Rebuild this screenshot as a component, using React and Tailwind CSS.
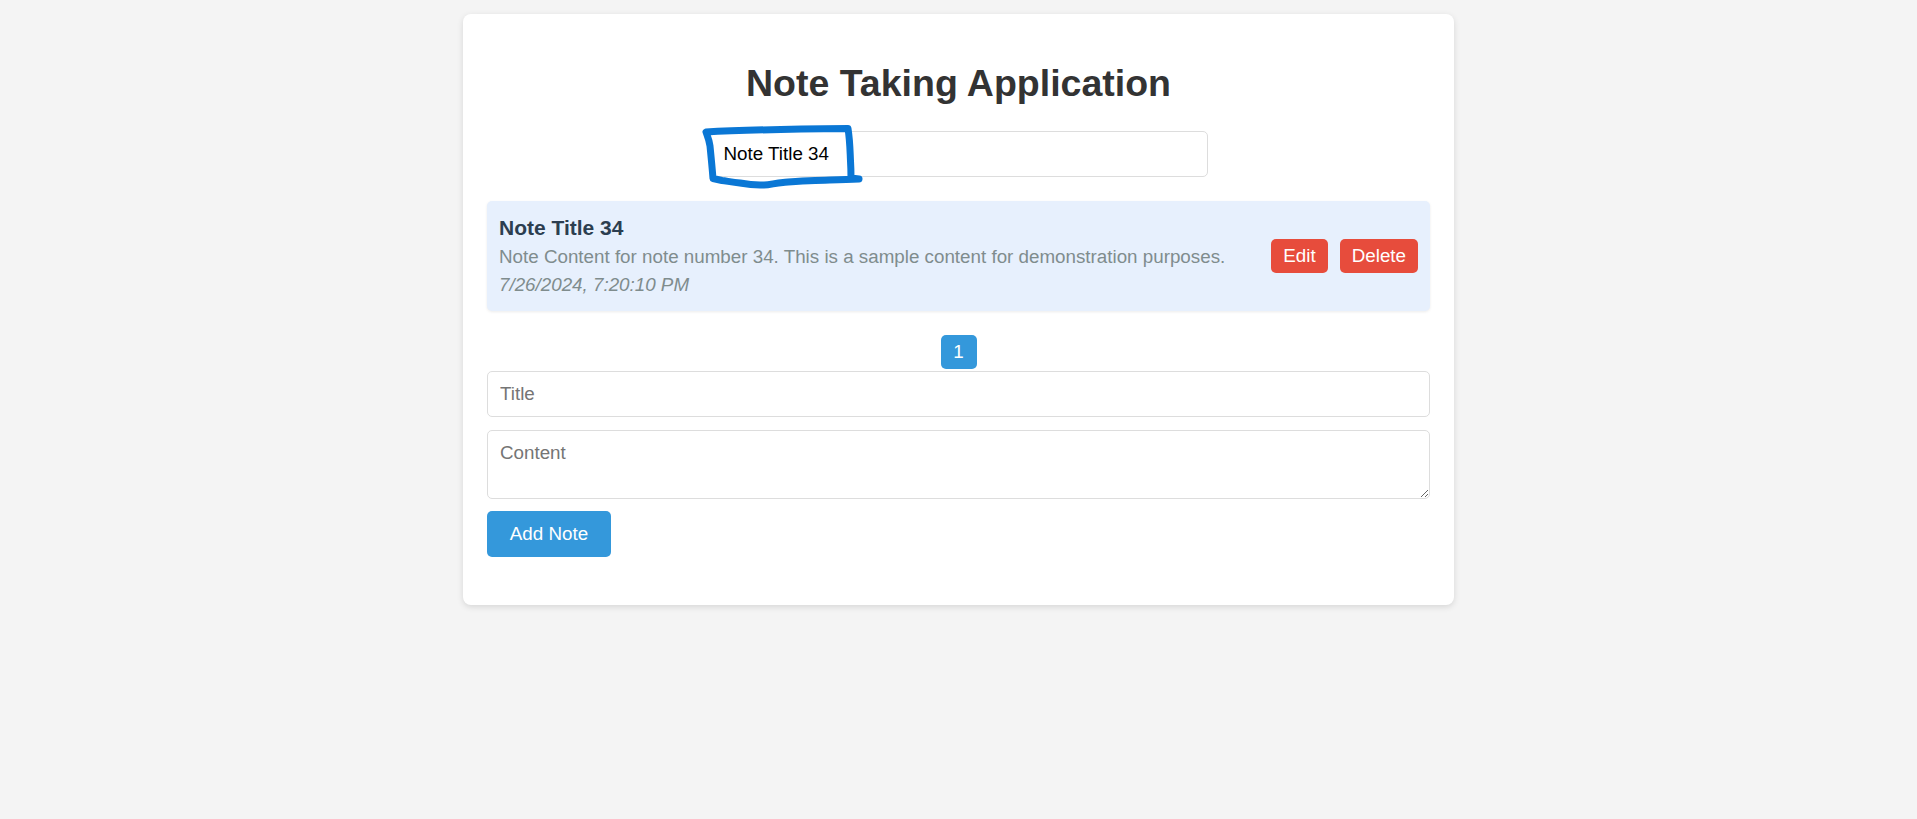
import React, { useState } from 'react';

const notes = [
  {
    id: 34,
    title: 'Note Title 34',
    content: 'Note Content for note number 34. This is a sample content for demonstration purposes.',
    date: '7/26/2024, 7:20:10 PM',
  },
];

const InkMark = () => (
  <svg
    className="absolute left-0 top-0 pointer-events-none"
    width="1917"
    height="819"
    viewBox="0 0 1917 819"
  >
    <path
      d="M706 132 C740 130 800 129 848 128.5 C850 141 850 151 850.5 161 C851 169 851 174 851 178 L859 179 C840 180 825 180 815 180.5 C800 181 790 182 783 182.5 C775 183 770 185 764 185 C755 185.5 748 184.5 740 183 C732 182 726 181 722 180.5 L713 178.5 C712 166 711 156 710 146 C709 139 707 135 706 132 Z"
      fill="none"
      stroke="#0a77d5"
      strokeWidth="7"
      strokeLinejoin="round"
      strokeLinecap="round"
    />
  </svg>
);

export default function App() {
  const [search, setSearch] = useState('Note Title 34');
  const [title, setTitle] = useState('');
  const [content, setContent] = useState('');

  return (
    <div
      className="relative min-h-[819px] bg-[#f4f4f4] pt-[14px] text-[18.8px]"
      style={{ fontFamily: '"Liberation Sans", Arial, sans-serif' }}
    >
      <div className="w-[991px] mx-auto bg-white rounded-[8px] shadow-[0_2px_6px_rgba(0,0,0,0.12)] p-[24px] pb-[48px]">
        <h1 className="text-center text-[37.5px] font-bold text-[#333] leading-[42px] mt-[24px] mb-[27px]">
          Note Taking Application
        </h1>

        <div className="flex justify-center">
          <input
            value={search}
            onChange={(e) => setSearch(e.target.value)}
            className="w-[498px] h-[46px] px-[13px] border border-[#ddd] rounded-[5px] text-[18.8px] text-black outline-none"
          />
        </div>

        <ul className="mt-[24px]">
          {notes.map((note) => (
            <li
              key={note.id}
              className="flex items-center justify-between bg-[#e7f0fd] rounded-[5px] shadow-[0_1px_3px_rgba(0,0,0,0.08)] px-[12px] pt-[12px] pb-[6px] h-[110px]"
            >
              <div className="flex flex-col">
                <h3 className="text-[21px] font-bold text-[#2c3e50] leading-[24px] mb-[6px]">{note.title}</h3>
                <p className="text-[#7f8c8d] leading-[22px] mb-[6px]">{note.content}</p>
                <p className="text-[#7f8c8d] italic leading-[22px] mb-[6px]">{note.date}</p>
              </div>
              <div className="flex gap-[12px] pb-[6px]">
                <button className="h-[34px] px-[12px] bg-[#e74c3c] text-white rounded-[5px] text-[18.8px]">Edit</button>
                <button className="h-[34px] px-[12px] bg-[#e74c3c] text-white rounded-[5px] text-[18.8px]">Delete</button>
              </div>
            </li>
          ))}
        </ul>

        <div className="flex justify-center mt-[24px] h-[36px]">
          <button className="w-[36px] h-[34px] bg-[#3498db] text-white rounded-[5px] text-[18.8px]">1</button>
        </div>

        <div className="flex flex-col">
          <input
            value={title}
            onChange={(e) => setTitle(e.target.value)}
            placeholder="Title"
            className="w-full h-[46px] px-[12px] border border-[#ddd] rounded-[5px] text-[18.8px] placeholder:text-[#757575] outline-none mb-[13px]"
          />
          <textarea
            value={content}
            onChange={(e) => setContent(e.target.value)}
            placeholder="Content"
            className="w-full h-[69px] px-[12px] py-[8px] border border-[#ddd] rounded-[5px] text-[18.8px] placeholder:text-[#757575] outline-none mb-[12px] block"
          />
          <button className="self-start w-[124px] h-[46px] bg-[#3498db] text-white rounded-[5px] text-[18.8px]">
            Add Note
          </button>
        </div>
      </div>
      <InkMark />
    </div>
  );
}
